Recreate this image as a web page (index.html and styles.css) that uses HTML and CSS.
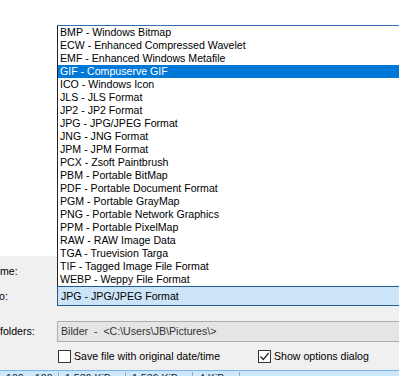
FILE: index.html
```html
<!DOCTYPE html>
<html lang="en">
<head>
    <meta charset="UTF-8">
    <title>Save as - format list</title>
    <link rel="stylesheet" href="styles.css">
</head>
<body>
    <div class="screen">
        <div class="backdrop"></div>

        <div class="dialog">
            <div class="row row-name">
                <span class="label">me:</span>
            </div>
            <div class="row row-format">
                <span class="label label-cut">o:</span>
                <div class="combo">JPG - JPG/JPEG Format</div>
            </div>
            <div class="row row-folder">
                <span class="label">folders:</span>
                <div class="pathbox">Bilder  -  &lt;C:\Users\JB\Pictures\&gt;</div>
            </div>
            <div class="row row-checks">
                <span class="label"></span>
                <div class="checks">
                    <label class="check check-date">
                        <span class="box"></span>
                        <span>Save file with original date/time</span>
                    </label>
                    <label class="check">
                        <span class="box checked">
                            <svg width="11" height="11" viewBox="0 0 11 11"><path d="M1.5 5.5 L4.3 8.5 L9.6 2" fill="none" stroke="#222" stroke-width="1.2"/></svg>
                        </span>
                        <span>Show options dialog</span>
                    </label>
                </div>
            </div>
            <div class="listview">
                <span class="cell c1">100 x 100</span>
                <span class="cell c2">1.536 KiB</span>
                <span class="cell c3">1.536 KiB</span>
                <span class="cell c4">4 KiB</span>
            </div>
        </div>

        <!-- format dropdown, opened over the dialog -->
        <ul class="dropdown">
            <li>BMP - Windows Bitmap</li>
            <li>ECW - Enhanced Compressed Wavelet</li>
            <li>EMF - Enhanced Windows Metafile</li>
            <li class="selected">GIF - Compuserve GIF</li>
            <li>ICO - Windows Icon</li>
            <li>JLS - JLS Format</li>
            <li>JP2 - JP2 Format</li>
            <li>JPG - JPG/JPEG Format</li>
            <li>JNG - JNG Format</li>
            <li>JPM - JPM Format</li>
            <li>PCX - Zsoft Paintbrush</li>
            <li>PBM - Portable BitMap</li>
            <li>PDF - Portable Document Format</li>
            <li>PGM - Portable GrayMap</li>
            <li>PNG - Portable Network Graphics</li>
            <li>PPM - Portable PixelMap</li>
            <li>RAW - RAW Image Data</li>
            <li>TGA - Truevision Targa</li>
            <li>TIF - Tagged Image File Format</li>
            <li>WEBP - Weppy File Format</li>
        </ul>
    </div>
</body>
</html>
```

FILE: styles.css
```css
html, body {
    margin: 0;
    padding: 0;
    background: #fff;
}
body {
    font-family: 'Liberation Sans', Arial, sans-serif;
    font-size: 10.6px;
    color: #000;
    width: 399px;
    height: 376px;
    overflow: hidden;
}
.screen {
    position: relative;
    width: 399px;
    height: 376px;
    overflow: hidden;
}
.backdrop {
    height: 256px;
    background: #fff;
}
.dialog {
    background: #f0f0f0;
    height: 120px;
    display: flex;
    flex-direction: column;
}
.row {
    display: grid;
    grid-template-columns: 57px 380px;
    align-items: center;
}
.label {
    white-space: nowrap;
    line-height: 13px;
}
.label-cut {
    margin-left: -1px;
}
.row-name {
    height: 31px;
}
.row-name .label {
    padding-top: 1px;
}
.row-format {
    height: 20px;
}
.combo {
    box-sizing: border-box;
    height: 20px;
    line-height: 18px;
    padding-left: 3px;
    background: #cce4f7;
    border: 1px solid #1f5c99;
    border-right: none;
}
.row-folder {
    margin-top: 15px;
    height: 21px;
}
.pathbox {
    box-sizing: border-box;
    height: 21px;
    line-height: 19px;
    padding-left: 3px;
    background: #e5e5e5;
    border: 1px solid #adadad;
    border-right: none;
    color: #333;
    white-space: pre;
}
.row-checks {
    margin-top: 8px;
    height: 13px;
}
.checks {
    display: flex;
    padding-left: 1px;
}
.check {
    display: flex;
    align-items: center;
    gap: 3px;
    line-height: 13px;
    white-space: nowrap;
}
.check-date {
    width: 200px;
}
.box {
    box-sizing: border-box;
    width: 13px;
    height: 13px;
    border: 1px solid #333;
    background: #fff;
    display: flex;
    align-items: center;
    justify-content: center;
}
.listview {
    margin-top: 7px;
    height: 5px;
    border-top: 1px solid #7eb4ea;
    background: #cce8ff;
    display: flex;
    overflow: hidden;
    color: #222;
    line-height: 13px;
    font-size: 10.6px;
}
.cell {
    display: block;
    margin-top: 1px;
    padding-left: 6px;
    white-space: nowrap;
    border-right: 1px solid #9aa9b8;
}
.c1 { width: 52px; }
.c2 { width: 60px; }
.c3 { width: 60px; }
.c4 { width: 40px; }

/* dropdown popup */
.dropdown {
    position: absolute;
    left: 57px;
    top: 25px;
    width: 360px;
    margin: 0;
    padding: 0;
    list-style: none;
    background: #fff;
    border-top: 1px solid #2c6fae;
    border-left: 1px solid #222;
}
.dropdown li {
    height: 13px;
    line-height: 13px;
    padding-left: 2px;
    white-space: nowrap;
}
.dropdown li.selected {
    background: #0078d7;
    color: #fff;
}
```
